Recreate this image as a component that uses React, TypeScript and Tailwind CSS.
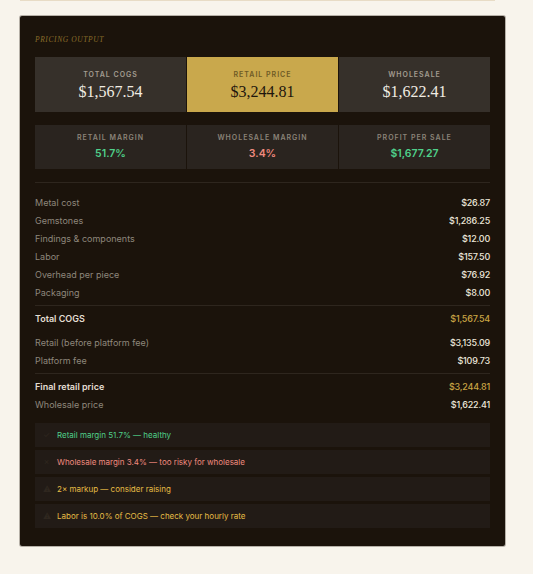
const sans = { fontFamily: "Inter, 'Open Sans', sans-serif" };
const serif = { fontFamily: "'Liberation Serif', 'DejaVu Serif', serif" };

const costRows = [
  ["Metal cost", "$26.87"],
  ["Gemstones", "$1,286.25"],
  ["Findings & components", "$12.00"],
  ["Labor", "$157.50"],
  ["Overhead per piece", "$76.92"],
  ["Packaging", "$8.00"],
];

const alerts = [
  { icon: "✓", text: "Retail margin 51.7% — healthy", color: "text-[#4fd08a]" },
  { icon: "✗", text: "Wholesale margin 3.4% — too risky for wholesale", color: "text-[#f08a7e]" },
  { icon: "⚠", text: "2× markup — consider raising", color: "text-[#e6bd45]" },
  { icon: "⚠", text: "Labor is 10.0% of COGS — check your hourly rate", color: "text-[#e6bd45]" },
];

const Row = ({ label, value, strong, gold }: { label: string; value: string; strong?: boolean; gold?: boolean }) => (
  <div className="flex h-[18px] items-center justify-between text-[9px]">
    <span className={strong ? "font-semibold text-[#e4ded3]" : "text-[#8e877c]"}>{label}</span>
    <span className={`font-medium tracking-[-0.2px] ${gold ? "text-[#c9a444]" : "text-[#ece6da]"}`}>{value}</span>
  </div>
);

export default function App() {
  return (
    <div className="min-h-[574px] w-[533px] bg-[#f8f4ec]" style={sans}>
      <div className="ml-5 h-px w-[475px] bg-[#e8dcc6]" />
      <div className="ml-5 mt-[15px] w-[485px] rounded-[2px] bg-[#1b130b] px-[15px] pb-[18px] pt-[18px] shadow-[0_0_0_1px_rgba(60,50,40,0.35)]">
        <div className="text-[7.5px] italic tracking-[0.6px] text-[#8a6c2a]" style={serif}>
          PRICING OUTPUT
        </div>

        <div className="mt-[12px] grid grid-cols-3 gap-px">
          <div className="flex h-[55px] flex-col items-center justify-center bg-[#36302a]">
            <div className="text-[7px] font-semibold tracking-[1px] text-[#a39c90]">TOTAL COGS</div>
            <div className="mt-[3px] text-[16px] leading-none text-[#f1ece3]" style={serif}>$1,567.54</div>
          </div>
          <div className="flex h-[55px] flex-col items-center justify-center bg-[#c9a84c]">
            <div className="text-[7px] font-semibold tracking-[1px] text-[#6e5a25]">RETAIL PRICE</div>
            <div className="mt-[3px] text-[16px] leading-none text-[#1e160c]" style={serif}>$3,244.81</div>
          </div>
          <div className="flex h-[55px] flex-col items-center justify-center bg-[#36302a]">
            <div className="text-[7px] font-semibold tracking-[1px] text-[#a39c90]">WHOLESALE</div>
            <div className="mt-[3px] text-[16px] leading-none text-[#f1ece3]" style={serif}>$1,622.41</div>
          </div>
        </div>

        <div className="mt-[13px] grid grid-cols-3 gap-px">
          <div className="flex h-[44px] flex-col items-center justify-center bg-[#2a241f]">
            <div className="text-[7px] font-semibold tracking-[1px] text-[#8a8378]">RETAIL MARGIN</div>
            <div className="mt-[2px] text-[10.5px] font-semibold text-[#4fd08a]">51.7%</div>
          </div>
          <div className="flex h-[44px] flex-col items-center justify-center bg-[#2a241f]">
            <div className="text-[7px] font-semibold tracking-[1px] text-[#8a8378]">WHOLESALE MARGIN</div>
            <div className="mt-[2px] text-[10.5px] font-semibold text-[#f08a7e]">3.4%</div>
          </div>
          <div className="flex h-[44px] flex-col items-center justify-center bg-[#2a241f]">
            <div className="text-[7px] font-semibold tracking-[1px] text-[#8a8378]">PROFIT PER SALE</div>
            <div className="mt-[2px] text-[10.5px] font-semibold text-[#4fd08a]">$1,677.27</div>
          </div>
        </div>

        <div className="mt-[13px] border-t border-[#2e261e] pt-[10px]">
          {costRows.map(([l, v]) => (
            <Row key={l} label={l} value={v} />
          ))}
        </div>
        <div className="mt-[4px] border-t border-[#2e261e] pt-[3px]">
          <Row label="Total COGS" value="$1,567.54" strong gold />
          <div className="mt-[6px]">
            <Row label="Retail (before platform fee)" value="$3,135.09" />
            <Row label="Platform fee" value="$109.73" />
          </div>
        </div>
        <div className="mt-[4px] border-t border-[#2e261e] pt-[3px]">
          <Row label="Final retail price" value="$3,244.81" strong gold />
          <Row label="Wholesale price" value="$1,622.41" />
        </div>

        <div className="mt-[10px] flex flex-col gap-[3px]">
          {alerts.map((a) => (
            <div key={a.text} className="flex h-[24px] items-center bg-[#221b16] pl-[8px] text-[8px]">
              <span className="w-[14px] text-[#2f271f]">{a.icon}</span>
              <span className={a.color}>{a.text}</span>
            </div>
          ))}
        </div>
      </div>
    </div>
  );
}
